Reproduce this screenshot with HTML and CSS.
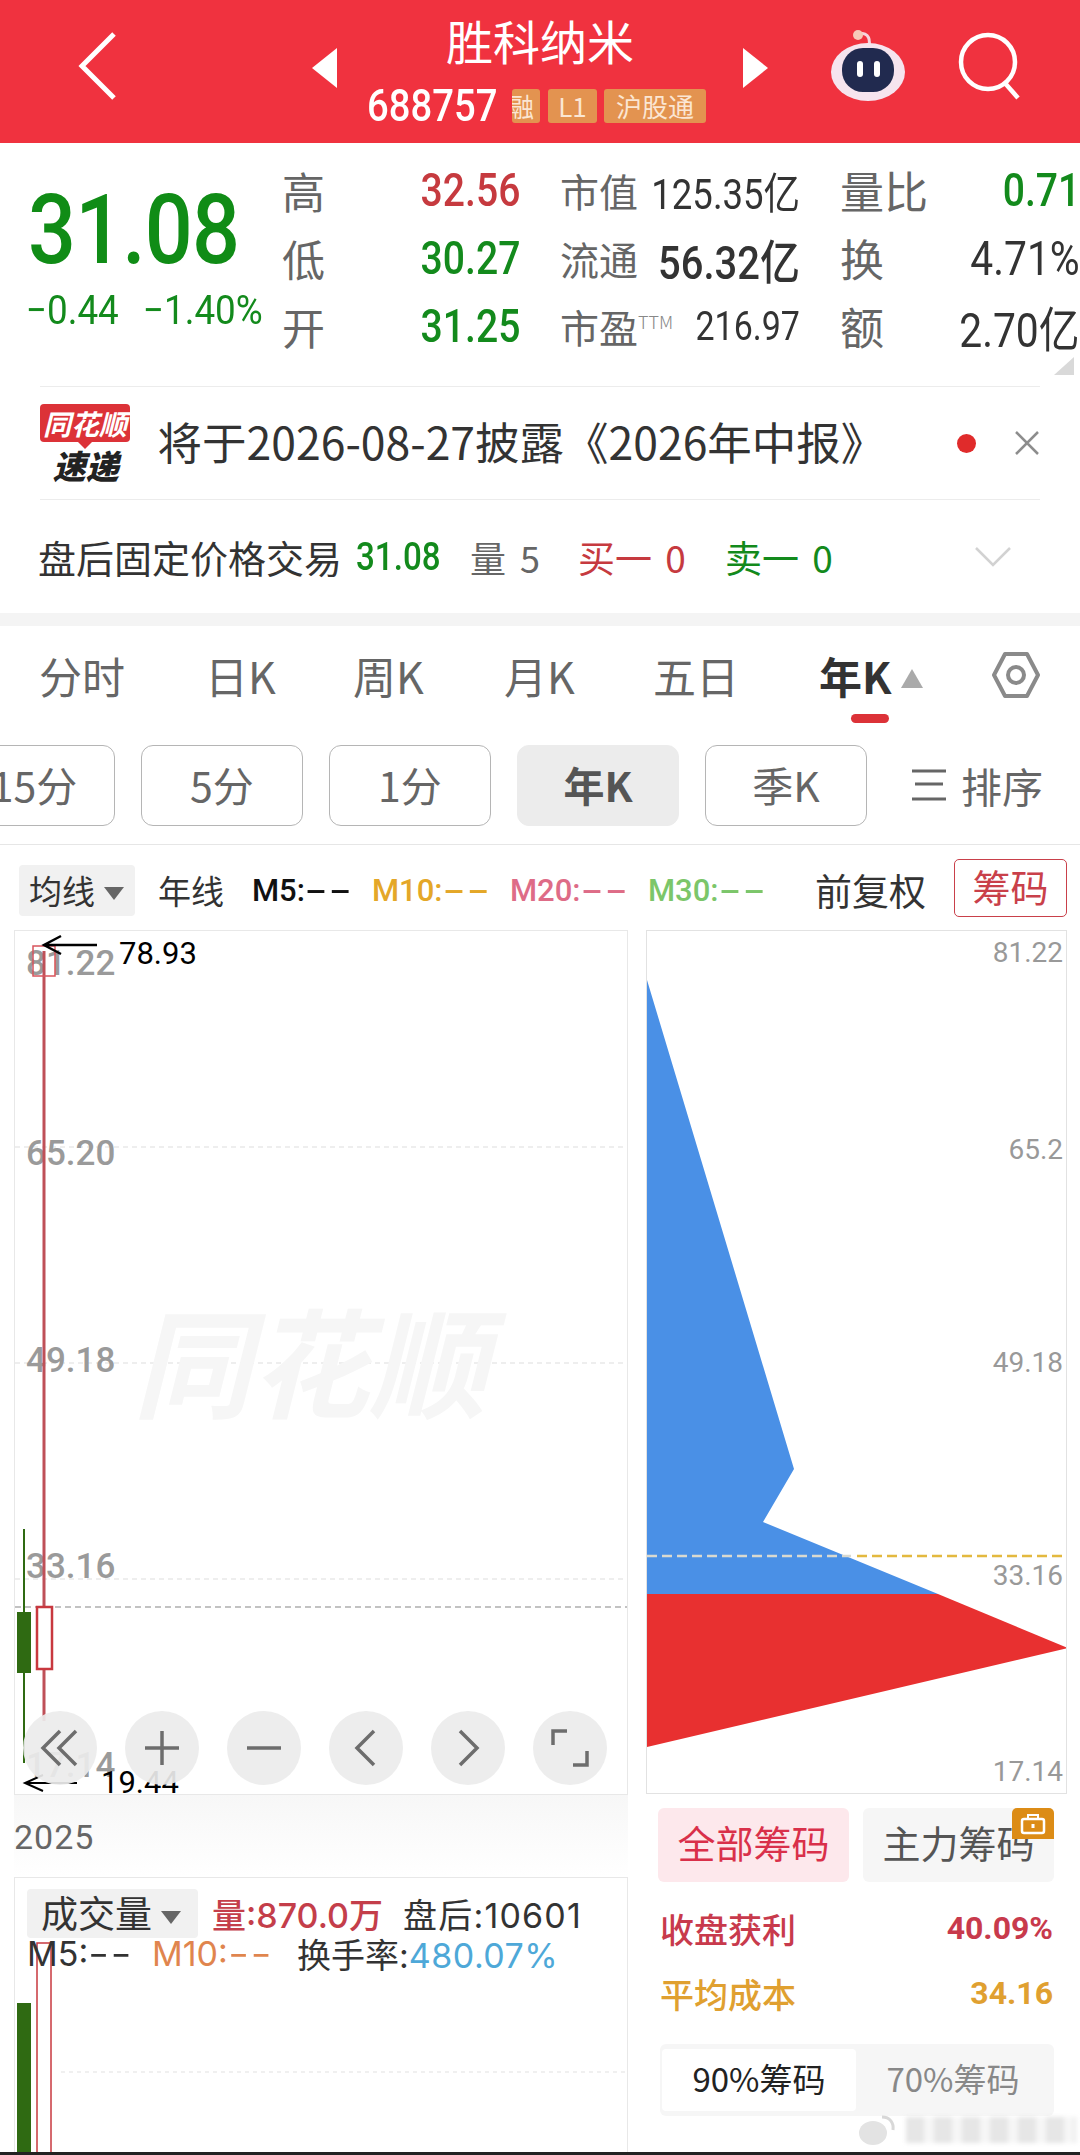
FILE: index.html
```html
<!DOCTYPE html>
<html lang="zh-CN">
<head>
    <meta charset="UTF-8">
    <title>胜科纳米</title>
    <link rel="stylesheet" href="styles.css">
</head>
<body>

<header class="topbar">
    <svg class="back" width="40" height="68" viewBox="0 0 40 68"><path d="M36 2 L4 34 L36 66" fill="none" stroke="#fff" stroke-width="5"/></svg>
    <div class="stock">
        <span class="tri tri-left"></span>
        <div class="stock-mid">
            <div class="stock-name">胜科纳米</div>
            <div class="stock-code">
                <span class="code cond">688757</span>
                <span class="tag tag-cut">融</span>
                <span class="tag tag-l1">L1</span>
                <span class="tag tag-hk">沪股通</span>
            </div>
        </div>
        <span class="tri tri-right"></span>
    </div>
    <svg class="robot" width="78" height="76" viewBox="0 0 78 76">
        <path d="M40 18 C42 8 36 4 31 6" fill="none" stroke="#f6d5de" stroke-width="3"/>
        <circle cx="29" cy="7" r="5" fill="#f7c9b8"/>
        <ellipse cx="39" cy="44" rx="37" ry="29" fill="#f6e4ee"/>
        <rect x="13" y="20" width="52" height="44" rx="21" fill="#212a4f"/>
        <rect x="28" y="33" width="6" height="16" rx="3" fill="#fff"/>
        <rect x="45" y="33" width="6" height="16" rx="3" fill="#fff"/>
    </svg>
    <svg class="search" width="64" height="70" viewBox="0 0 64 70"><circle cx="30" cy="30" r="27" fill="none" stroke="#fff" stroke-width="4.5"/><path d="M46 50 L60 66" stroke="#fff" stroke-width="4.5"/></svg>
</header>

<section class="quote">
    <div class="price-col">
        <div class="price cond">31.08</div>
        <div class="change"><span class="cond">−0.44</span><span class="cond">−1.40%</span></div>
    </div>
    <div class="quote-grid">
        <span class="q-label">高</span><span class="q-val red cond-r">32.56</span>
        <span class="q-label2">市值</span><span class="q-num cond-r">125.35亿</span>
        <span class="q-label3">量比</span><span class="q-end up-val cond-r">0.71</span>

        <span class="q-label">低</span><span class="q-val green cond-r">30.27</span>
        <span class="q-label2">流通</span><span class="q-num strong cond-r">56.32亿</span>
        <span class="q-label3">换</span><span class="q-end cond-r">4.71%</span>

        <span class="q-label">开</span><span class="q-val green cond-r">31.25</span>
        <span class="q-label2">市盈<sup class="ttm">TTM</sup></span><span class="q-num small cond-r">216.97</span>
        <span class="q-label3">额</span><span class="q-end cond-r">2.70亿</span>
    </div>
    <span class="corner"></span>
</section>

<section class="notice">
    <div class="logo">
        <div class="logo-top">同花顺</div>
        <div class="logo-bottom">速递</div>
    </div>
    <div class="notice-text">将于2026-08-27披露《2026年中报》</div>
    <span class="dot"></span>
    <svg class="close" width="26" height="26" viewBox="0 0 26 26"><path d="M2 2 L24 24 M24 2 L2 24" stroke="#8d8d8d" stroke-width="2.5"/></svg>
</section>

<section class="after">
    <span class="after-title">盘后固定价格交易</span>
    <span class="after-price green cond">31.08</span>
    <span class="after-vol">量 5</span>
    <span class="after-buy red">买一 0</span>
    <span class="after-sell green">卖一 0</span>
    <svg class="chev" width="36" height="20" viewBox="0 0 36 20"><path d="M1 1 L18 18 L35 1" fill="none" stroke="#d2d2d2" stroke-width="2.5"/></svg>
</section>

<div class="band"></div>

<nav class="tabs">
    <span class="tab t1">分时</span>
    <span class="tab t2">日K</span>
    <span class="tab t3">周K</span>
    <span class="tab t4">月K</span>
    <span class="tab t5">五日</span>
    <span class="tab active">年K<i class="up"></i><b class="underline"></b></span>
    <svg class="hex" width="50" height="48" viewBox="0 0 50 48"><path d="M14 3 H36 L47 24 L36 45 H14 L3 24 Z" fill="none" stroke="#8a8a8a" stroke-width="4" stroke-linejoin="round"/><circle cx="25" cy="24" r="8" fill="none" stroke="#8a8a8a" stroke-width="4"/></svg>
</nav>

<div class="periods">
    <span class="pbtn first">15分</span>
    <span class="pbtn">5分</span>
    <span class="pbtn">1分</span>
    <span class="pbtn on">年K</span>
    <span class="pbtn">季K</span>
    <span class="sort"><svg width="36" height="32" viewBox="0 0 36 32"><path d="M1 2 H35 M4 15 H32 M1 30 H35" stroke="#666" stroke-width="3"/></svg>排序</span>
</div>

<div class="ma-row">
    <span class="chip">均线<i class="down"></i></span>
    <span class="ma-year">年线</span>
    <span class="ma m5">M5:<span class="dash">--</span></span>
    <span class="ma m10">M10:<span class="dash">--</span></span>
    <span class="ma m20">M20:<span class="dash">--</span></span>
    <span class="ma m30">M30:<span class="dash">--</span></span>
    <span class="fq">前复权</span>
    <span class="chouma">筹码</span>
</div>

<main class="charts">
    <div class="left-col">
        <div class="kline">
            <svg class="chart" width="614" height="865" viewBox="14 930 614 865">
                <g class="grid">
                    <line x1="14" y1="1146" x2="628" y2="1146"/>
                    <line x1="14" y1="1362" x2="628" y2="1362"/>
                    <line x1="14" y1="1578" x2="628" y2="1578"/>
                </g>
                <text class="wm" x="132" y="1408">同花顺</text>
                <line x1="14" y1="1606" x2="628" y2="1606" stroke="#aeaeae" stroke-width="1.5" stroke-dasharray="6 4"/>
                <text class="axis" x="25" y="974">81.22</text>
                <text class="axis" x="25" y="1164">65.20</text>
                <text class="axis" x="25" y="1371">49.18</text>
                <text class="axis" x="25" y="1577">33.16</text>
                <text class="axis" x="25" y="1776">17.14</text>
                <rect x="22" y="1528" width="2" height="234" fill="#2f6a12"/>
                <rect x="16" y="1611" width="14" height="61" fill="#2f6a12"/>
                <rect x="41.500" y="950" width="3" height="655" fill="#bf5058"/>
                <rect x="41.500" y="1669" width="3" height="51" fill="#bf5058"/>
                <rect x="36" y="1606" width="15" height="62" fill="#fff" stroke="#c8383f" stroke-width="2.500"/>
                <rect x="32" y="945" width="22" height="30" fill="none" stroke="#d8545c" stroke-width="1.500"/>
                <path d="M96 944 H44 M60 935 L43 944 L60 953" fill="none" stroke="#000" stroke-width="2.500"/>
                <text class="mark" x="118" y="963">78.93</text>
                <path d="M76 1782 H24 M42 1774 L24 1782 L42 1790" fill="none" stroke="#000" stroke-width="2"/>
                <text class="mark" x="100" y="1792">19.44</text>
            </svg>
            <div class="chart-tools">
                <span class="tool"><svg width="40" height="40" viewBox="0 0 40 40"><path d="M20 3 L3 20 L20 37 M36 3 L19 20 L36 37" fill="none" stroke="#6d6d6d" stroke-width="3.500"/></svg></span>
                <span class="tool"><svg width="40" height="40" viewBox="0 0 40 40"><path d="M20 3 V37 M3 20 H37" stroke="#6d6d6d" stroke-width="3.500"/></svg></span>
                <span class="tool"><svg width="40" height="40" viewBox="0 0 40 40"><path d="M3 20 H37" stroke="#6d6d6d" stroke-width="3.500"/></svg></span>
                <span class="tool"><svg width="40" height="40" viewBox="0 0 40 40"><path d="M28 3 L11 20 L28 37" fill="none" stroke="#6d6d6d" stroke-width="3.500"/></svg></span>
                <span class="tool"><svg width="40" height="40" viewBox="0 0 40 40"><path d="M12 3 L29 20 L12 37" fill="none" stroke="#6d6d6d" stroke-width="3.500"/></svg></span>
                <span class="tool"><svg width="40" height="40" viewBox="0 0 40 40"><path d="M3 17 V3 H17 M37 23 V37 H23" fill="none" stroke="#6d6d6d" stroke-width="3.500"/></svg></span>
            </div>
        </div>
        <div class="year">2025</div>
        <div class="volume">
            <svg class="chart" width="614" height="278" viewBox="14 1877 614 278">
                <line x1="60" y1="2071" x2="628" y2="2071" stroke="#ececec" stroke-width="1.500" stroke-dasharray="4 4"/>
                <rect x="16" y="2002" width="14" height="153" fill="#2f6a12"/>
                <rect x="36" y="1942" width="14" height="220" fill="none" stroke="#c8383f" stroke-width="1.500"/>
            </svg>
            <div class="vol-line one">
                <span class="chip big">成交量<i class="down"></i></span>
                <span class="red2 semi">量:870.0万</span>
                <span class="dark spaced">盘后:10601</span>
            </div>
            <div class="vol-line two">
                <span class="dark vm5">M5:<span class="dash">--</span></span>
                <span class="orange vm10">M10:<span class="dash">--</span></span>
                <span class="dark">换手率:<span class="blue">480.07%</span></span>
            </div>
        </div>
    </div>

    <aside class="right-col">
        <div class="chips">
            <svg class="chart" width="421" height="864" viewBox="646 930 421 864">
                <polygon points="646,979 793,1468 762,1521 937,1593 646,1593" fill="#4a90e6"/>
                <polygon points="646,1593 937,1593 1067,1647 646,1746" fill="#e83030"/>
                <line x1="646" y1="1555" x2="850" y2="1555" stroke="#d9d9d0" stroke-width="2.500" stroke-dasharray="10 5"/>
                <line x1="856" y1="1555" x2="1062" y2="1555" stroke="#e3b93f" stroke-width="2.500" stroke-dasharray="10 5"/>
                <text class="axis2" x="1062" y="961">81.22</text>
                <text class="axis2" x="1062" y="1158">65.2</text>
                <text class="axis2" x="1062" y="1371">49.18</text>
                <text class="axis2" x="1062" y="1584">33.16</text>
                <text class="axis2" x="1062" y="1780">17.14</text>
            </svg>
        </div>
        <div class="chip-tabs">
            <span class="ctab sel">全部筹码</span>
            <span class="ctab">主力筹码</span>
            <span class="lock"><svg width="26" height="22" viewBox="0 0 26 22"><rect x="2" y="6" width="22" height="14" rx="2" fill="none" stroke="#fff" stroke-width="2.500"/><path d="M8 6 V2 H18 V6" fill="none" stroke="#fff" stroke-width="2"/><rect x="11.500" y="11" width="3" height="4" fill="#fff"/></svg></span>
        </div>
        <div class="stat profit"><span>收盘获利</span><span class="stat-num">40.09%</span></div>
        <div class="stat cost"><span>平均成本</span><span class="stat-num">34.16</span></div>
        <div class="toggle">
            <span class="tg on">90%筹码</span>
            <span class="tg">70%筹码</span>
        </div>
    </aside>
</main>

<div class="weibo-mark">
    <svg width="40" height="34" viewBox="0 0 40 34"><ellipse cx="15" cy="20" rx="14" ry="12" fill="#e3e3e3"/><path d="M24 4 C32 4 36 10 35 17" fill="none" stroke="#d8d8d8" stroke-width="3"/></svg>
    <span class="wm-bars"></span>
</div>
<div class="edge"></div>

</body>
</html>
```

FILE: styles.css
```css
* {
    box-sizing: border-box;
}
html, body {
    margin: 0;
    padding: 0;
}
body {
    width: 1080px;
    height: 2155px;
    overflow: hidden;
    position: relative;
    background: #fff;
    color: #333;
    font-family: "Noto Sans CJK SC", "Noto Sans", sans-serif;
}
i, b {
    display: inline-block;
}
.red { color: #c63a3f; }
.green { color: #138a1c; }
.cond {
    display: inline-block;
    transform: scaleX(.85);
    transform-origin: left center;
    font-family: Roboto, sans-serif;
}
.cond-r {
    display: inline-block;
    justify-self: end;
    transform: scaleX(.85);
    transform-origin: right center;
    text-align: right;
    font-family: Roboto, "Noto Sans CJK SC", sans-serif;
    white-space: nowrap;
}
.dash {
    display: inline-block;
    transform: scaleX(2.1);
    transform-origin: left center;
    letter-spacing: 1px;
}

/* top bar */
.topbar {
    height: 143px;
    background: #f0323f;
    display: flex;
    align-items: flex-start;
    color: #fff;
}
.back {
    margin: 32px 0 0 78px;
}
.stock {
    width: 456px;
    margin: 0 0 0 194px;
    display: flex;
    justify-content: space-between;
    align-items: center;
    position: relative;
    height: 135px;
    flex-shrink: 0;
}
.tri {
    width: 0;
    height: 0;
    border-top: 20px solid transparent;
    border-bottom: 20px solid transparent;
    margin-top: 0;
}
.tri-left { border-right: 25px solid #fff; }
.tri-right { border-left: 25px solid #fff; }
.stock-mid {
    flex: 1;
    display: flex;
    flex-direction: column;
    align-items: center;
}
.stock-name {
    font-size: 47px;
    line-height: 62px;
    margin-top: 1px;
}
.stock-code {
    display: flex;
    align-items: center;
    height: 44px;
    margin-top: 13px;
    width: 400px;
    padding-left: 27px;
    position: relative;
}
.code {
    font-size: 45px;
    width: 145px;
    font-weight: 500;
    flex-shrink: 0;
}
.tag {
    background: #e39350;
    color: #fbe6d3;
    font-size: 26px;
    height: 34px;
    line-height: 34px;
    border-radius: 3px;
    text-align: center;
    flex-shrink: 0;
    margin-right: 7px;
}
.tag-cut {
    width: 28px;
    margin-right: 8px;
    overflow: hidden;
    text-indent: -10px;
    white-space: nowrap;
}
.tag-l1 { width: 49px; }
.tag-hk { width: 102px; }
.robot {
    margin: 28px 0 0 61px;
}
.search {
    margin: 32px 0 0 51px;
}

/* quote block */
.quote {
    height: 243px;
    position: relative;
    display: flex;
}
.price-col {
    width: 282px;
    padding-left: 28px;
}
.price {
    font-size: 96px;
    font-weight: 500;
    line-height: 100px;
    margin-top: 37px;
    color: #108c16;
    transform: scaleX(.88);
    letter-spacing: -1px;
}
.change {
    display: flex;
    font-size: 40px;
    line-height: 40px;
    margin: 11px 0 0 -2px;
    color: #138a1c;
}
.change .cond { transform: scaleX(.92); }
.change span:first-child { width: 117px; }
.quote-grid {
    display: grid;
    grid-template-columns: 43px 195px 40px 78px 162px 40px 90px 150px;
    grid-auto-rows: 68px;
    margin-top: 13px;
    align-items: center;
    width: 798px;
}
.quote-grid .q-label, .quote-grid .q-label2, .quote-grid .q-label3 {
    color: #666;
    white-space: nowrap;
}
.q-label { font-size: 43px; }
.q-val {
    font-size: 46px;
    font-weight: 500;
}
.q-label2 {
    grid-column: 4;
    font-size: 39px;
}
.q-num {
    font-size: 43px;
    color: #333;
    grid-column: 5;
}
.q-num.strong { font-size: 47px; font-weight: 500; }
.q-num.small { font-size: 40px; }
.q-label3 {
    grid-column: 7;
    font-size: 44px;
}
.q-end {
    grid-column: 8;
    font-size: 48px;
    color: #333;
}
.q-end.up-val {
    color: #138a1c;
    font-size: 46px;
    font-weight: 500;
}
.ttm {
    font-size: 18px;
    font-weight: 300;
    color: #888;
    vertical-align: 14px;
    line-height: 0;
}
.corner {
    position: absolute;
    right: 6px;
    top: 214px;
    border-left: 20px solid transparent;
    border-bottom: 18px solid #d9d9d9;
}

/* notice */
.notice {
    height: 114px;
    margin: 0 40px;
    border-top: 1px solid #ececec;
    border-bottom: 1px solid #ececec;
    display: flex;
    align-items: center;
}
.logo {
    width: 92px;
    margin-top: 2px;
}
.logo-top {
    background: #dc3238;
    color: #fff;
    font-size: 28px;
    line-height: 38px;
    height: 38px;
    width: 90px;
    font-weight: 700;
    font-style: italic;
    text-align: center;
    border-radius: 4px;
    position: relative;
    white-space: nowrap;
}
.logo-top::after {
    content: "";
    position: absolute;
    left: 38px;
    top: 38px;
    border-left: 7px solid transparent;
    border-right: 7px solid transparent;
    border-top: 7px solid #dc3238;
}
.logo-bottom {
    font-size: 33px;
    line-height: 38px;
    font-weight: 900;
    font-style: italic;
    color: #222;
    text-align: center;
    margin-top: 4px;
}
.notice-text {
    font-size: 44.500px;
    margin: 0 0 5px 26px;
    width: 803px;
    color: #333;
    white-space: nowrap;
}
.dot {
    width: 19px;
    height: 19px;
    border-radius: 50%;
    background: #e02b2b;
    flex-shrink: 0;
}
.close {
    margin-left: 38px;
    flex-shrink: 0;
}

/* after hours */
.after {
    height: 113px;
    position: relative;
    display: flex;
    align-items: center;
    font-size: 38px;
    padding-left: 38px;
    white-space: nowrap;
}
.after-title { width: 318px; color: #333; }
.after-price { width: 114px; font-size: 39px; font-weight: 500; }
.after-vol { width: 108px; color: #666; font-size: 36px; word-spacing: 6px; }
.after-buy { width: 147px; font-size: 37px; word-spacing: 5px; }
.after-sell { width: 250px; font-size: 37px; word-spacing: 5px; }

.band {
    height: 13px;
    background: #f4f4f4;
}

/* period tabs */
.tabs {
    height: 105px;
    position: relative;
    display: flex;
    align-items: center;
    font-size: 43px;
    color: #666;
    padding-bottom: 8px;
}
.tab { white-space: nowrap; }
.t1 { margin-left: 39px; width: 166px; }
.t2 { width: 148px; }
.t3 { width: 151px; }
.t4 { width: 149px; }
.t5 { width: 166px; }
.active {
    color: #333;
    font-weight: 700;
    width: 172px;
    position: relative;
}
.up {
    width: 0;
    height: 0;
    border-left: 11px solid transparent;
    border-right: 11px solid transparent;
    border-bottom: 19px solid #aaa;
    margin-left: 9px;
    vertical-align: 6px;
}
.underline {
    position: absolute;
    left: 32px;
    top: 70px;
    width: 38px;
    height: 9px;
    border-radius: 5px;
    background: #dc3238;
}

.periods {
    height: 114px;
    padding-top: 14px;
    display: flex;
    gap: 26px;
    align-items: flex-start;
    border-bottom: 1px solid #e6e6e6;
    font-size: 41px;
    color: #666;
}
.pbtn {
    width: 162px;
    height: 81px;
    border: 1px solid #b5b5b5;
    border-radius: 12px;
    line-height: 76px;
    text-align: center;
    flex-shrink: 0;
}
.pbtn.first {
    margin-left: -47px;
}
.pbtn.on {
    background: #ececec;
    border-color: #ececec;
    font-weight: 700;
    color: #555;
}
.sort {
    display: flex;
    align-items: center;
    gap: 14px;
    margin: 18px 0 0 18px;
    line-height: 44px;
    white-space: nowrap;
}

/* MA row */
.ma-row {
    height: 85px;
    display: flex;
    align-items: center;
    font-size: 30px;
    position: relative;
    white-space: nowrap;
    padding-top: 5px;
}
.chip {
    margin-left: 19px;
    width: 116px;
    height: 51px;
    background: #f1f1f1;
    border-radius: 4px;
    padding-left: 10px;
    line-height: 50px;
    color: #333;
    font-size: 33px;
}
.chip .down { margin-left: 9px; }
.down {
    width: 0;
    height: 0;
    border-left: 10px solid transparent;
    border-right: 10px solid transparent;
    border-top: 13px solid #666;
    vertical-align: 4px;
}
.ma-year { margin-left: 23px; width: 94px; color: #333; font-size: 33px; }
.ma { width: 138px; font-family: Roboto, sans-serif; font-size: 31px; font-weight: 500; }
.ma.m5 { color: #111; width: 120px; }
.m10 { color: #e4a728; }
.m20 { color: #de6c87; }
.m30 { color: #7cc66a; width: 167px; }
.fq { width: 139px; font-size: 37px; color: #333; }
.chouma {
    width: 113px;
    height: 58px;
    border: 1.500px solid #c9404a;
    border-radius: 5px;
    color: #c9404a;
    text-align: center;
    font-size: 38px;
    line-height: 52px;
    margin-top: -5px;
}

/* charts */
.charts {
    display: flex;
    height: 1225px;
}
.left-col {
    width: 614px;
    margin-left: 14px;
}
.chart {
    display: block;
    position: absolute;
    left: 0;
    top: 0;
}
.kline {
    height: 865px;
    position: relative;
    border: 1.500px solid #e8e8e8;
    overflow: hidden;
}
.grid line {
    stroke: #e9e9e9;
    stroke-width: 1.500;
    stroke-dasharray: 5 4;
}
.wm {
    font-size: 118px;
    font-weight: 700;
    font-style: italic;
    fill: #f6f6f6;
}
.axis {
    font-family: Roboto, sans-serif;
    font-size: 35px;
    font-weight: 500;
    fill: #9a9a9a;
}
.mark {
    font-family: Roboto, sans-serif;
    font-size: 31px;
    fill: #000;
}
.chart-tools {
    position: absolute;
    left: 8px;
    top: 780px;
    display: flex;
    gap: 28px;
}
.tool {
    width: 74px;
    height: 74px;
    border-radius: 50%;
    background: rgba(235, 235, 235, .92);
    display: flex;
    align-items: center;
    justify-content: center;
}
.year {
    height: 82px;
    line-height: 84px;
    font-family: Roboto, sans-serif;
    font-size: 34px;
    color: #666;
    letter-spacing: 1px;
    background: linear-gradient(180deg, #f7f7f7 0, #fff 100%);
}
.volume {
    height: 278px;
    position: relative;
    border: 1.500px solid #e8e8e8;
    border-bottom: none;
    overflow: hidden;
}
.vol-line {
    position: relative;
    display: flex;
    align-items: center;
    font-family: Inter, "Noto Sans CJK SC", sans-serif;
    font-size: 34px;
    white-space: nowrap;
    padding-left: 12px;
}
.vol-line .dash {
    transform: scaleX(1.35);
}
.vol-line.one {
    margin-top: 11px;
    height: 49px;
}
.vol-line.two {
    height: 42px;
    margin-top: -6px;
}
.chip.big {
    margin-left: 0;
    width: 171px;
    height: 49px;
    font-family: "Noto Sans CJK SC", sans-serif;
    font-size: 37px;
    padding-left: 14px;
    line-height: 47px;
    margin-right: 14px;
}
.semi { font-weight: 500; margin-right: 20px; }
.spaced { letter-spacing: 1.200px; }
.red2 { color: #c43e4a; }
.dark { color: #333; }
.orange { color: #e0854e; }
.blue { color: #4ea8d8; letter-spacing: .5px; }
.vm5 { width: 125px; }
.vm10 { width: 145px; }

.right-col {
    width: 421px;
    margin-left: 18px;
}
.chips {
    height: 864px;
    position: relative;
    border: 1.500px solid #e2e2e2;
    overflow: hidden;
}
.axis2 {
    font-family: Roboto, sans-serif;
    font-size: 28px;
    fill: #999;
    text-anchor: end;
}
.chip-tabs {
    height: 94px;
    padding: 14px 13px 0 12px;
    display: flex;
    gap: 14px;
    position: relative;
}
.ctab {
    width: 191px;
    height: 74px;
    background: #f6f6f6;
    color: #555;
    border-radius: 6px;
    text-align: center;
    font-size: 38px;
    line-height: 68px;
}
.ctab.sel {
    background: #fde8ec;
    color: #d9304a;
}
.lock {
    position: absolute;
    right: 13px;
    top: 14px;
    width: 42px;
    height: 31px;
    background: #dc8c16;
    border-radius: 5px 5px 0 0;
    display: flex;
    align-items: center;
    justify-content: center;
}
.stat {
    display: flex;
    justify-content: space-between;
    font-size: 34px;
    font-weight: 500;
    height: 65px;
    line-height: 65px;
    padding: 0 14px;
}
.stat-num {
    font-family: Roboto, sans-serif;
    font-size: 32px;
    font-weight: 700;
}
.profit { color: #c83a4c; margin-top: 8px; }
.cost { color: #e0a030; }
.toggle {
    margin: 18px 13px 0 14px;
    height: 72px;
    background: #f6f6f6;
    border-radius: 6px;
    padding: 5px 2px;
    display: flex;
    font-size: 33px;
}
.tg {
    width: 194px;
    text-align: center;
    line-height: 58px;
    color: #888;
    white-space: nowrap;
}
.tg.on {
    background: #fff;
    color: #222;
    border-radius: 4px;
}

/* screenshot overlay */
.weibo-mark {
    position: absolute;
    left: 858px;
    top: 2112px;
    width: 222px;
    height: 36px;
    display: flex;
    align-items: center;
    gap: 8px;
}
.wm-bars {
    width: 170px;
    height: 26px;
    background: repeating-linear-gradient(90deg, #e6e6e6 0 18px, #f6f6f6 18px 28px);
    filter: blur(2px);
}
.edge {
    position: absolute;
    left: 0;
    top: 2152px;
    width: 1080px;
    height: 3px;
    background: #222;
}
```
